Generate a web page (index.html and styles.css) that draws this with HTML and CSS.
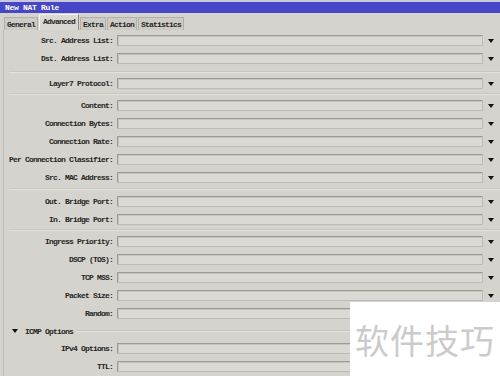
FILE: index.html
```html
<!DOCTYPE html>
<html lang="en">

<head>
    <meta charset="UTF-8">
    <meta name="viewport" content="width=device-width, initial-scale=1.0">
    <title>New NAT Rule</title>
    <link rel="stylesheet" href="styles.css">
</head>

<body>

    <div class="window">
        <div class="titlebar">New NAT Rule</div>

        <div class="tabs">
            <span class="tab">General</span>
            <span class="tab active">Advanced</span>
            <span class="tab">Extra</span>
            <span class="tab">Action</span>
            <span class="tab">Statistics</span>
        </div>

        <div class="panel">
            <div class="group g1">
                <div class="row"><label>Src. Address List:</label><span class="field"></span><span class="arrow"></span></div>
                <div class="row"><label>Dst. Address List:</label><span class="field"></span><span class="arrow"></span></div>
            </div>
            <div class="sep s1"></div>

            <div class="group g2">
                <div class="row"><label>Layer7 Protocol:</label><span class="field"></span><span class="arrow"></span></div>
            </div>
            <div class="sep s2"></div>

            <div class="group g3">
                <div class="row"><label>Content:</label><span class="field"></span><span class="arrow"></span></div>
                <div class="row"><label>Connection Bytes:</label><span class="field"></span><span class="arrow"></span></div>
                <div class="row"><label>Connection Rate:</label><span class="field"></span><span class="arrow"></span></div>
                <div class="row"><label>Per Connection Classifier:</label><span class="field"></span><span class="arrow"></span></div>
                <div class="row"><label>Src. MAC Address:</label><span class="field"></span><span class="arrow"></span></div>
            </div>
            <div class="sep s3"></div>

            <div class="group g4">
                <div class="row"><label>Out. Bridge Port:</label><span class="field"></span><span class="arrow"></span></div>
                <div class="row"><label>In. Bridge Port:</label><span class="field"></span><span class="arrow"></span></div>
            </div>
            <div class="sep s4"></div>

            <div class="group g5">
                <div class="row"><label>Ingress Priority:</label><span class="field"></span><span class="arrow"></span></div>
                <div class="row"><label>DSCP (TOS):</label><span class="field"></span><span class="arrow"></span></div>
                <div class="row"><label>TCP MSS:</label><span class="field"></span><span class="arrow"></span></div>
                <div class="row"><label>Packet Size:</label><span class="field"></span><span class="arrow"></span></div>
                <div class="row"><label>Random:</label><span class="field"></span><span class="arrow"></span></div>
            </div>

            <div class="section">
                <span class="caret"></span>
                <span class="section-title">ICMP Options</span>
                <span class="section-line"></span>
            </div>

            <div class="group g6">
                <div class="row"><label>IPv4 Options:</label><span class="field"></span><span class="arrow"></span></div>
                <div class="row"><label>TTL:</label><span class="field"></span><span class="arrow"></span></div>
            </div>
        </div>

        <!-- site watermark over the corner -->
        <div class="watermark">软件技巧</div>
    </div>

</body>

</html>
```

FILE: styles.css
```css
body {
    margin: 0;
    padding: 0;
    background-color: #d5d3cd;
    font-family: "Liberation Mono", monospace;
    color: #262626;
}

.window {
    position: relative;
    width: 500px;
    height: 376px;
    overflow: hidden;
    background-color: #d5d3cd;
    border-top: 2px solid #c9c8dc;
    box-sizing: border-box;
}

.titlebar {
    height: 11px;
    line-height: 11px;
    padding-left: 5px;
    background-color: #4646c6;
    color: #fff;
    font-size: 8px;
    font-weight: bold;
    letter-spacing: -0.3px;
}

.tabs {
    display: flex;
    align-items: flex-end;
    height: 16px;
    margin-top: 1px;
    padding-left: 4px;
    gap: 1px;
}

.tab {
    height: 13px;
    line-height: 13px;
    padding: 0 2px;
    background-color: #cdcbc5;
    border: 1px solid #b1afa9;
    border-bottom: none;
    font-size: 8px;
    font-weight: bold;
    letter-spacing: -0.8px;
    box-sizing: border-box;
}

.tab.active {
    height: 16px;
    line-height: 14px;
    padding: 0 3px;
    background-color: #dad8d2;
    border-color: #f4f4f0 #8e8c86 #8e8c86 #f4f4f0;
}

.panel {
    margin-left: 3px;
    border-left: 1px solid #bdbbb5;
    padding-top: 5px;
    height: 346px;
}

.group {
    display: flex;
    flex-direction: column;
    gap: 7px;
}

.row {
    display: flex;
    align-items: center;
    height: 11px;
}

.row label {
    width: 109px;
    text-align: right;
    font-size: 8px;
    font-weight: bold;
    letter-spacing: -0.8px;
    white-space: nowrap;
}

.field {
    width: 366px;
    height: 11px;
    margin-left: 4px;
    background-color: #dbd9d4;
    border: 1px solid #9c9a94;
    border-right-color: #bdbbb5;
    border-bottom-color: #bdbbb5;
    box-shadow: inset 1px 1px 0 #c6c4be;
    border-radius: 1px;
    box-sizing: border-box;
}

.arrow {
    width: 0;
    height: 0;
    margin-left: 5px;
    border-left: 3px solid transparent;
    border-right: 3px solid transparent;
    border-top: 4px solid #111;
}

.sep {
    margin-left: 5px;
    height: 0;
    border-top: 1px solid #c9c7c1;
    border-bottom: 1px solid #e3e2dd;
}

.s1 {
    margin-top: 7px;
    margin-bottom: 5px;
}

.s2 {
    margin-top: 4px;
    margin-bottom: 5px;
}

.s3 {
    margin-top: 5px;
    margin-bottom: 6px;
}

.s4 {
    margin-top: 4px;
    margin-bottom: 5px;
}

.section {
    display: flex;
    align-items: center;
    height: 10px;
    margin-top: 7px;
    margin-bottom: 7px;
    padding-left: 8px;
}

.caret {
    width: 0;
    height: 0;
    border-left: 3px solid transparent;
    border-right: 3px solid transparent;
    border-top: 4px solid #111;
}

.section-title {
    margin-left: 7px;
    font-size: 8px;
    font-weight: bold;
    letter-spacing: -0.8px;
}

.section-line {
    flex-grow: 1;
    margin-left: 4px;
    border-top: 1px solid #c4c2bc;
    border-bottom: 1px solid #e6e5e0;
}

.watermark {
    position: absolute;
    left: 350px;
    top: 300px;
    width: 150px;
    height: 76px;
    background-color: #fff;
    color: #cbcbcb;
    font-family: "Noto Sans CJK SC", sans-serif;
    font-size: 34px;
    line-height: 76px;
    text-align: center;
    letter-spacing: 1px;
}
```
